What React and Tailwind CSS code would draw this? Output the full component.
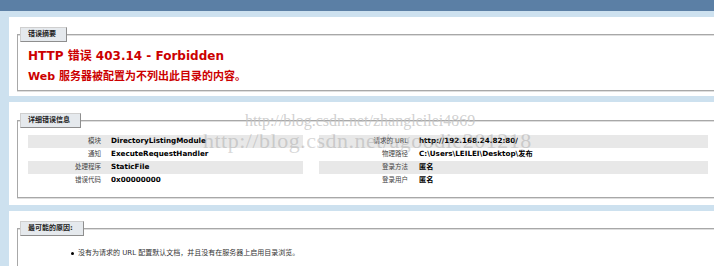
const latin = "font-['DejaVu_Sans','Noto_Sans_CJK_SC',sans-serif]"

function Legend({ children }) {
  return (
    <legend className="ml-[2px] h-[15px] border border-[#cfcfcf] border-r-[#8e8e8e] border-b-[#8e8e8e] bg-[#e5e9ed] pl-[7px] pr-[10px] text-[7px] leading-[13px] font-bold text-[#222]">
      {children}
    </legend>
  )
}

function Box({ title, children, className }) {
  return (
    <fieldset
      className={`border border-r-0 border-[#a8a8a8] shadow-[inset_0_1px_0_#dedede,0_1px_0_#dedede] ${className}`}
    >
      <Legend>{title}</Legend>
      {children}
    </fieldset>
  )
}

function Row({ label, value, shaded, labelWidth, gapLeft }) {
  return (
    <div className={`flex h-[13px] items-center ${shaded ? 'bg-[#e8e8e8]' : ''}`}>
      <div className={`${labelWidth} shrink-0 text-right text-[6.5px] text-[#444]`}>{label}</div>
      <div className={`${gapLeft} text-[7.2px] font-bold text-black whitespace-nowrap`}>{value}</div>
    </div>
  )
}

const leftRows = [
  ['模块', 'DirectoryListingModule'],
  ['通知', 'ExecuteRequestHandler'],
  ['处理程序', 'StaticFile'],
  ['错误代码', '0x00000000'],
]

const rightRows = [
  ['请求的 URL', 'http://192.168.24.82:80/'],
  ['物理路径', 'C:\\Users\\LEILEI\\Desktop\\发布'],
  ['登录方法', '匿名'],
  ['登录用户', '匿名'],
]

export default function App() {
  return (
    <div className={`relative h-[266px] overflow-hidden bg-[#cde1ef] ${latin}`}>
      <div className="h-[11px] bg-[#5b7fa5]" />

      <div className="flex flex-col gap-[6px] pt-[6px] pl-[9px]">
        {/* 错误摘要 */}
        <section className="bg-white pt-[10px] pb-[5px] pl-[8px]">
          <Box title="错误摘要" className="pb-[5px]">
            <div className="pl-[10px] text-[#cc0000] font-bold">
              <h3 className="mt-[6px] text-[12px] leading-[16px]">HTTP 错误 403.14 - Forbidden</h3>
              <h4 className="mt-[5px] text-[11px] leading-[16px]">Web 服务器被配置为不列出此目录的内容。</h4>
            </div>
          </Box>
        </section>

        {/* 详细错误信息 */}
        <section className="bg-white pt-[11px] pb-[7px] pl-[8px]">
          <Box title="详细错误信息" className="pb-[10px]">
            <div className="mt-[7px] grid grid-cols-[275px_1fr] gap-x-[16px] pl-[10px] pr-[6px]">
              <div>
                {leftRows.map(([l, v], i) => (
                  <Row key={l} label={l} value={v} shaded={i % 2 === 0} labelWidth="w-[73px]" gapLeft="pl-[10px]" />
                ))}
              </div>
              <div>
                {rightRows.map(([l, v], i) => (
                  <Row key={l} label={l} value={v} shaded={i % 2 === 0} labelWidth="w-[89px]" gapLeft="pl-[11px]" />
                ))}
              </div>
            </div>
          </Box>
        </section>

        {/* 最可能的原因 */}
        <section className="h-[56px] overflow-hidden bg-white pt-[10px] pl-[8px]">
          <Box title="最可能的原因:" className="pb-[20px]">
            <ul className="mt-[12px] pl-[53px]">
              <li className="flex h-[11px] items-center gap-[4px] text-[7px] text-[#333]">
                <span className="h-[3px] w-[3px] rounded-full bg-black" />
                <span>没有为请求的 URL 配置默认文档，并且没有在服务器上启用目录浏览。</span>
              </li>
            </ul>
          </Box>
        </section>
      </div>

      {/* csdn watermarks */}
      <div className="pointer-events-none absolute left-[245px] top-[113px] font-['Liberation_Serif',serif] text-[16px] leading-none text-[#c4c4c4]/80 whitespace-nowrap">
        http://blog.csdn.net/zhangleilei4869
      </div>
      <div className="pointer-events-none absolute left-[203px] top-[130px] font-['Liberation_Serif',serif] text-[22px] leading-none tracking-[0.5px] text-[#9a9a9a]/40 whitespace-nowrap">
        http://blog.csdn.net/agoodie201218
      </div>
    </div>
  )
}
